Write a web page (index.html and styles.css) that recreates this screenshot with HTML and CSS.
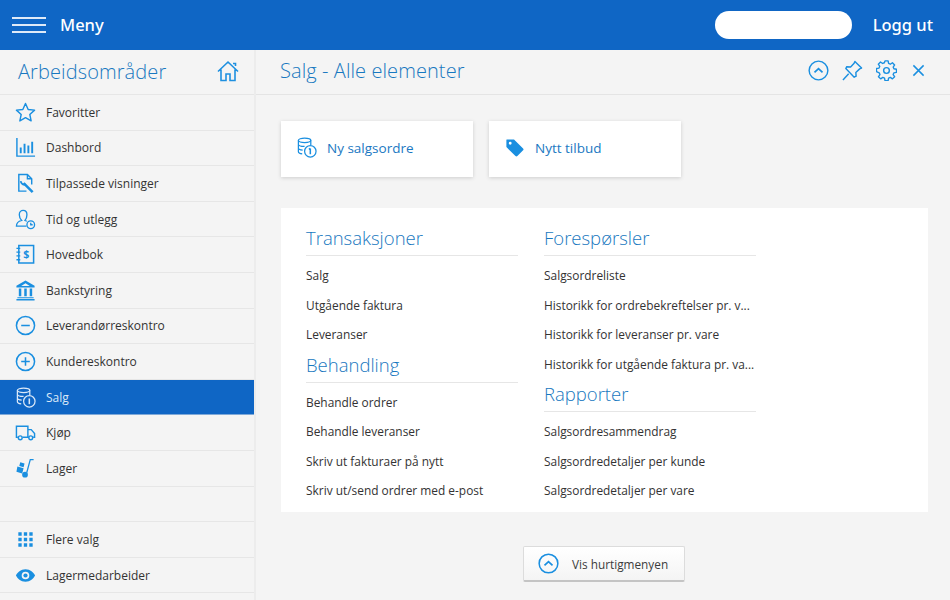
FILE: index.html
```html
<!DOCTYPE html>
<html lang="nb">
<head>
<meta charset="utf-8">
<title>Salg - Alle elementer</title>
<link rel="stylesheet" href="styles.css">
</head>
<body>
<header class="topbar">
  <div class="burger"><span></span><span></span><span></span></div>
  <div class="menu-label">Meny</div>
  <div class="search"></div>
  <div class="logout">Logg ut</div>
</header>
<div class="body">
  <aside class="sidebar">
    <div class="side-head">
      <span class="side-title">Arbeidsområder</span>
      <svg class="home" viewBox="0 0 22 22" fill="none" stroke="currentColor" stroke-width="1.6" stroke-linejoin="miter"><path d="M1 11.5 11 2l10 9.5M4 9.5V20.500h5v-6.500h4v6.500h5V9.500M16 3.500h2.500V6"/></svg>
    </div>
    <nav class="side-list">
      <div class="side-item"><svg class="ic" viewBox="0 0 22 22" fill="none" stroke="currentColor" stroke-width="1.500" stroke-linejoin="round"><path d="M11 1.500l2.800 6.300 6.700.7-5 4.500 1.400 6.800L11 16.400l-5.900 3.400 1.400-6.800-5-4.500 6.700-.7z"/></svg><span>Favoritter</span></div>
      <div class="side-item"><svg class="ic" viewBox="0 0 22 22" fill="none" stroke="currentColor" stroke-width="1.500"><path d="M2 1v19h19"/><path stroke-width="2" d="M6 17v-6M10 17V7M14 17v-8M18 17V5"/></svg><span>Dashbord</span></div>
      <div class="side-item"><svg class="ic" viewBox="0 0 22 22" fill="none" stroke="currentColor" stroke-width="1.500"><path d="M12 19H4V1.500h9l4.500 4.500V12M13 1.500V6h4.500"/><path stroke-width="2.600" d="M9 10.500l9.500 9.500"/><path stroke-width="1.800" d="M6 8.500c.2 2.500 2.500 4.500 5.500 3.500"/></svg><span>Tilpassede visninger</span></div>
      <div class="side-item"><svg class="ic" viewBox="0 0 22 22" fill="none" stroke="currentColor" stroke-width="1.400"><path d="M12 18H1.500c0-4 2-5 5.500-6-2-2-2.500-4-2.500-6 0-3 2-4.500 4-4.500s4 1.500 4 4.500c0 2-.5 4-2 6l2 .8"/><circle cx="16.500" cy="16.500" r="4"/><path d="M16.500 14.500v2h2"/></svg><span>Tid og utlegg</span></div>
      <div class="side-item"><svg class="ic" viewBox="0 0 22 22" fill="none" stroke="currentColor" stroke-width="1.600"><path d="M4 1.500h15.500v18.500H4z"/><path stroke-width="1.400" d="M1.500 4.500h4M1.500 8.500h4M1.500 12.500h4M1.500 16.500h4"/><text class="dollar" x="11.800" y="15" text-anchor="middle">$</text></svg><span>Hovedbok</span></div>
      <div class="side-item"><svg class="ic" viewBox="0 0 22 22" fill="currentColor"><path fill-rule="evenodd" d="M11 .5 1.500 6v1.800h19V6zM11 3.400l4.500 2.800h-9z"/><path d="M4 9h2.600v8H4zM9.700 9h2.600v8H9.700zM15.400 9H18v8h-2.600zM2.500 18h17v1h-17zM1.500 20h19v1.500h-19z"/></svg><span>Bankstyring</span></div>
      <div class="side-item"><svg class="ic" viewBox="0 0 22 22" fill="none" stroke="currentColor" stroke-width="1.600"><circle cx="11" cy="11" r="9.500"/><path d="M6.500 11h9"/></svg><span>Leverandørreskontro</span></div>
      <div class="side-item"><svg class="ic" viewBox="0 0 22 22" fill="none" stroke="currentColor" stroke-width="1.600"><circle cx="11" cy="11" r="9.500"/><path d="M6.500 11h9M11 6.500v9"/></svg><span>Kundereskontro</span></div>
      <div class="side-item active"><svg class="ic" viewBox="0 0 22 22" fill="none" stroke="currentColor" stroke-width="1.300"><ellipse cx="9" cy="3.500" rx="6.500" ry="2.300"/><path d="M2.500 3.500v12c0 1 1.500 2 4 2.200M15.500 3.500v5M2.500 7.500c0 1.500 3 2.300 6.500 2.300M2.500 11.500c0 1.300 2 2 4.500 2.200"/><circle cx="15" cy="15" r="6"/><path stroke-width="1.600" d="M15 12v6"/></svg><span>Salg</span></div>
      <div class="side-item"><svg class="ic" viewBox="0 0 22 22" fill="none" stroke="currentColor" stroke-width="1.500"><path d="M3 16H1.500V4.500h12V16H8M13.500 8h3.500l3.500 4v4h-1.500M13.500 16h1"/><circle cx="5.500" cy="16.500" r="2"/><circle cx="16.500" cy="16.500" r="2"/></svg><span>Kjøp</span></div>
      <div class="side-item"><svg class="ic" viewBox="0 0 22 22" fill="currentColor"><path d="M15.500 1h4v1.300h-3L13 15.500l-1.400-.4z"/><circle cx="10.500" cy="17.500" r="3"/><path d="M2.500 9l6.500 1.800-1.500 5.500L1.500 14.500zM5.500 4.500l4.500 1.300-1 4-4.500-1.300z"/></svg><span>Lager</span></div>
      <div class="side-item blank"></div>
      <div class="side-item"><svg class="ic" viewBox="0 0 22 22" fill="currentColor"><path d="M3.500 3.500H7V7H3.500zM9.250 3.500h3.500V7h-3.500zM15 3.500h3.500V7H15zM3.500 9.250H7v3.500H3.500zM9.250 9.250h3.500v3.500h-3.500zM15 9.250h3.500v3.500H15zM3.500 15H7v3.500H3.500zM9.250 15h3.500v3.500h-3.500zM15 15h3.500v3.500H15z"/></svg><span>Flere valg</span></div>
      <div class="side-item"><svg class="ic" viewBox="0 0 22 22" fill="currentColor"><path fill-rule="evenodd" d="M11 4.500c5 0 8.500 3.500 10 6.500-1.500 3-5 6.500-10 6.500S2.500 14 1 11c1.500-3 5-6.500 10-6.500zM11 7a4 4 0 1 0 0 8 4 4 0 0 0 0-8z"/><circle cx="11" cy="11" r="2.200"/></svg><span>Lagermedarbeider</span></div>
    </nav>
  </aside>
  <main class="main">
    <div class="main-head">
      <h1 class="main-title">Salg - Alle elementer</h1>
      <div class="tools">
        <svg class="tool" viewBox="0 0 22 22" fill="none" stroke="currentColor" stroke-width="1.500"><circle cx="11" cy="11" r="9.800"/><path stroke-width="1.800" d="M6.800 13l4.200-4 4.200 4"/></svg>
        <svg class="tool" viewBox="0 0 22 22" fill="none" stroke="currentColor" stroke-width="1.500" stroke-linejoin="round"><path d="M13.500 1.500l7 7-2 .8-4 3.700.3 4-2 1L4 9l1-2 4 .3 3.700-4z"/><path d="M7 14.500 1 21"/></svg>
        <svg class="tool" viewBox="0 0 22 22" fill="none" stroke="currentColor" stroke-width="1.500" stroke-linejoin="round"><path d="M9.300 1h3.400l.5 2.800 1.900.8 2.300-1.600 2.400 2.400-1.600 2.300.8 1.900 2.800.5v3.400l-2.800.5-.8 1.900 1.600 2.300-2.400 2.400-2.300-1.600-1.900.8-.5 2.800H9.300l-.5-2.800-1.900-.8-2.300 1.600-2.400-2.400 1.600-2.300-.8-1.900L0 12.700V9.300l2.800-.5.800-1.900L2 4.600 4.400 2.200l2.300 1.600 1.900-.8z" transform="translate(.5 0) scale(.96)"/><circle cx="11" cy="11" r="3"/></svg>
        <svg class="close" viewBox="0 0 14 14" fill="none" stroke="currentColor" stroke-width="1.600"><path d="M1.500 1.500l11 11M12.500 1.500l-11 11"/></svg>
      </div>
    </div>
    <div class="content">
      <div class="cards">
        <a class="card"><svg class="card-ic" viewBox="0 0 22 22" fill="none" stroke="currentColor" stroke-width="1.300"><ellipse cx="9" cy="3.500" rx="6.500" ry="2.300"/><path d="M2.500 3.500v12c0 1 1.500 2 4 2.200M15.500 3.500v5M2.500 7.500c0 1.500 3 2.300 6.500 2.300M2.500 11.500c0 1.300 2 2 4.500 2.200"/><circle cx="15" cy="15" r="6"/><path stroke-width="1.600" d="M15 12v6M13.500 13l1.500-1"/></svg><span>Ny salgsordre</span></a>
        <a class="card"><svg class="card-ic" viewBox="0 0 22 22" fill="currentColor"><path fill-rule="evenodd" d="M3 2.500h7.500l9.500 9.500c.6.600.6 1.400 0 2l-6 6c-.6.600-1.400.6-2 0L2.500 10.500V3a.5.500 0 0 1 .5-.5zM6.500 5a1.500 1.500 0 1 0 0 3 1.500 1.500 0 0 0 0-3z"/></svg><span>Nytt tilbud</span></a>
      </div>
      <section class="panel">
        <div class="col">
          <h2 class="group-title">Transaksjoner</h2>
          <ul class="links">
            <li>Salg</li><li>Utgående faktura</li><li>Leveranser</li>
          </ul>
          <h2 class="group-title second">Behandling</h2>
          <ul class="links">
            <li>Behandle ordrer</li><li>Behandle leveranser</li><li>Skriv ut fakturaer på nytt</li><li>Skriv ut/send ordrer med e-post</li>
          </ul>
        </div>
        <div class="col">
          <h2 class="group-title">Forespørsler</h2>
          <ul class="links">
            <li>Salgsordreliste</li><li>Historikk for ordrebekreftelser pr. v...</li><li>Historikk for leveranser pr. vare</li><li>Historikk for utgående faktura pr. va...</li>
          </ul>
          <h2 class="group-title third">Rapporter</h2>
          <ul class="links">
            <li>Salgsordresammendrag</li><li>Salgsordredetaljer per kunde</li><li>Salgsordredetaljer per vare</li>
          </ul>
        </div>
      </section>
      <div class="quick-wrap">
        <button class="quick"><svg class="quick-ic" viewBox="0 0 22 22" fill="none" stroke="currentColor" stroke-width="1.600"><circle cx="11" cy="11" r="9.800"/><path stroke-width="1.800" d="M6.800 13l4.200-4 4.200 4"/></svg><span>Vis hurtigmenyen</span></button>
      </div>
    </div>
  </main>
</div>
</body>
</html>
```
FILE: styles.css
```css
* { box-sizing: border-box; }
html, body { margin: 0; height: 100%; overflow: hidden; }
body {
  width: 950px;
  height: 600px;
  font-family: "Open Sans", "Noto Sans", sans-serif;
  background: #f4f4f4;
  color: #3c3c3c;
  display: flex;
  flex-direction: column;
}
.topbar {
  flex: 0 0 50px;
  height: 50px;
  background: #0f66c5;
  color: #fff;
  display: flex;
  align-items: center;
  padding: 0 17px 0 12px;
}
.burger { width: 34px; display: flex; flex-direction: column; gap: 5px; margin-right: 14px; }
.burger span { display: block; height: 2px; background: #dfeaf8; }
.menu-label { font-family: "Noto Sans", sans-serif; font-size: 16.500px; font-weight: 500; flex: 1; padding-bottom: 2px; }
.search { width: 137px; height: 28px; border-radius: 14px; background: #fff; margin-right: 21px; }
.logout { font-family: "Noto Sans", sans-serif; font-size: 16.500px; font-weight: 500; padding-bottom: 2px; }
.body { flex: 1; display: flex; min-height: 0; }
.sidebar { width: 256px; flex: 0 0 256px; border-right: 2px solid #ececec; }
.side-head {
  height: 45px;
  border-bottom: 1px solid #e6e6e6;
  display: flex;
  align-items: center;
  justify-content: space-between;
  padding: 0 15px 2px 18px;
}
.side-title { font-size: 20px; font-weight: 300; color: #1878c0; letter-spacing: .1px; }
.home { width: 22px; height: 22px; color: #1e90e0; }
.side-item {
  height: 35.600px;
  border-bottom: 1px solid #e6e6e6;
  display: flex;
  align-items: center;
  padding-left: 15px;
  font-size: 12px;
  color: #333;
}
.side-item span { margin-left: 10px; }
.side-item .ic { width: 21px; height: 21px; flex: none; color: #1a8fe0; }
.side-item.active { background: #0f66c5; color: #dbe9f8; border-bottom-color: #7fa9d8; }
.side-item.active .ic { color: #dbe9f8; }
.dollar { font-size: 11px; font-weight: 700; fill: currentColor; stroke: none; font-family: "Open Sans", sans-serif; }
.main { flex: 1; min-width: 0; }
.main-head {
  height: 45px;
  border-bottom: 1px solid #e4e4e4;
  display: flex;
  align-items: center;
  justify-content: space-between;
  padding: 0 24px 4px 24px;
}
.main-title { margin: 0; font-size: 20px; font-weight: 300; color: #1878c0; letter-spacing: .08px; }
.tools { display: flex; align-items: center; gap: 13px; margin-right: 1px; }
.tool { width: 21px; height: 21px; color: #1a8fe0; }
.close { width: 13px; height: 13px; color: #1a8fe0; margin-left: 2px; }
.content { padding: 26px 22px 0 25px; }
.cards { display: flex; gap: 16px; }
.card {
  width: 192px;
  height: 56px;
  background: #fff;
  box-shadow: 0 1px 4px rgba(0, 0, 0, .16);
  display: flex;
  align-items: center;
  padding-left: 15px;
  color: #1a78c2;
  font-size: 13.500px;
  padding-bottom: 3px;
}
.card-ic { width: 21px; height: 21px; color: #1a8fe0; margin-right: 10px; flex: none; }
.panel {
  margin-top: 31px;
  height: 304px;
  background: #fff;
  padding: 17px 0 0 25px;
  display: flex;
  gap: 26px;
}
.col { width: 212px; }
.group-title {
  margin: 0;
  height: 31px;
  border-bottom: 1px solid #e6e6e6;
  font-size: 18.500px;
  font-weight: 300;
  line-height: 26px;
  color: #1878c0;
}
.group-title.second { margin-top: 2px; }
.group-title.third { margin-top: 2px; }
.links { list-style: none; margin: 5.400px 0 0; padding: 0; }
.links li {
  height: 29.400px;
  line-height: 29.400px;
  font-size: 11.900px;
  color: #333;
  white-space: nowrap;
  overflow: hidden;
}
.quick-wrap { margin-top: 34px; padding-left: 242px; }
.quick {
  width: 162px;
  height: 36px;
  background: linear-gradient(#fff, #f4f4f4);
  border: 1px solid #dcdcdc;
  border-bottom: 2px solid #c4c4c4;
  border-radius: 2px;
  display: flex;
  align-items: center;
  padding: 0 0 0 14px;
  font-family: inherit;
  font-size: 11.800px;
  color: #3c3c3c;
}
.quick-ic { width: 21px; height: 21px; color: #1a8fe0; margin-right: 13px; flex: none; }
```
